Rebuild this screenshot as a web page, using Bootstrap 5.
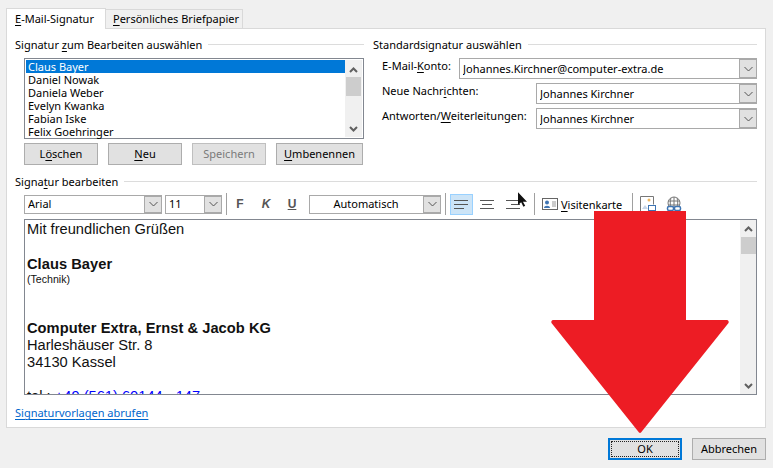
<!DOCTYPE html>
<html lang="de">
<head>
    <meta charset="UTF-8">
    <meta name="viewport" content="width=device-width, initial-scale=1.0">
    <title>Signaturen und Briefpapier</title>
    <link href="https://cdn.jsdelivr.net/npm/bootstrap@5.3.3/dist/css/bootstrap.min.css" rel="stylesheet">
    <script src="https://cdn.jsdelivr.net/npm/bootstrap@5.3.3/dist/js/bootstrap.bundle.min.js"></script>
    <style>
        html, body { height: 468px; overflow: hidden; }
        body { background: #f0f0f0; color: #000; font: 11px/15px "Noto Sans", sans-serif; position: relative; }
        u { text-underline-offset: 2px; }

        .dlg { width: 773px; height: 468px; padding: 8px 7px 0 6px; }

        .tabstrip { display: flex; height: 20px; align-items: flex-end; }
        .tabitem { height: 19px; padding: 1px 7px 0; background: #f0f0f0; border: 1px solid #d9d9d9; border-bottom: 0; border-left: 0; width: 137px; white-space: nowrap; }
        .tabitem.sel { height: 21px; width: 100px; padding: 2px 8px 0 8px; background: #fff; border-left: 1px solid #d9d9d9; margin-bottom: -1px; position: relative; z-index: 1; }

        .pane { height: 400px; background: #fff; border: 1px solid #d9d9d9; padding: 8px 8px 0; }

        .grp-title { display: flex; align-items: center; gap: 6px; height: 15px; white-space: nowrap; }
        .grp-title::after { content: ""; flex: 1; border-top: 1px solid #dcdcdc; }

        .col-left { width: 349px; }
        .col-right { width: 394px; margin-left: 9px; }
        .col-right .grp-title { margin-bottom: 6px; }

        .sig-list { margin: 6px 0 0 9px; width: 340px; height: 81px; border: 1px solid #828790; display: flex; padding: 1px; }
        .sig-items { flex: 1; list-style: none; margin: 0; padding: 0; }
        .sig-items li { height: 13px; line-height: 14px; padding-left: 2px; }
        .sig-items li.on { background: #0078d7; color: #fff; }

        .vbar { width: 17px; background: #f0f0f0; display: flex; flex-direction: column; align-items: center; }
        .vbar .thumb { width: 15px; background: #cdcdcd; }
        .vbar .thumb.t-list { height: 19px; }
        .vbar .thumb.t-edit { height: 17px; }
        .vbar svg:last-child { margin-top: auto; }

        .dbtn { height: 22px; padding: 0; background: #e1e1e1; border: 1px solid #adadad; border-radius: 0; color: #000; font: inherit; line-height: 18px; }
        .btn-row { margin: 4px 0 0 9px; }
        .btn-row .dbtn { width: 74px; margin-right: 10px; }
        .btn-row .dbtn:last-child { width: 87px; margin-right: 0; }
        .dbtn.off { color: #7a7a7a; border-color: #bfbfbf; }

        .acct-row { display: flex; height: 25px; padding-left: 9px; }
        .acct-row label { flex: 1; white-space: nowrap; }
        .drop { height: 21px; display: flex; border: 1px solid #a9a9a9; background: #fff; padding-left: 3px; line-height: 19px; }
        .drop span { flex: 1; white-space: nowrap; overflow: hidden; }
        .drop i { width: 17px; background: #e1e1e1; border: 1px solid #a9a9a9; border-right-width: 0; display: flex; align-items: center; justify-content: center; }
        .drop.w-mail { width: 298px; }
        .drop.w-name { width: 221px; }

        .edit-sec { margin-top: 9px; }
        .bar { display: flex; align-items: center; height: 22px; margin: 4px 0 4px 9px; }
        .bar .drop { height: 19px; line-height: 15px; }
        .bar .drop.font-box { width: 138px; margin-right: 3px; }
        .bar .drop.size-box { width: 57px; }
        .bar .drop.color-box { width: 132px; margin-left: 4px; }
        .bar .drop.color-box span { text-align: center; padding-right: 4px; }
        .tsep { width: 1px; height: 22px; background: #a0a0a0; margin: 0 4px; flex: none; }
        .tsep.after-al { margin-left: 6px; }
        .tsep.after-card { margin-left: 4px; }
        .tsep.after-size { margin-right: 0; }
        .fmt { width: 26px; text-align: center; font-weight: 700; color: #555; font-family: "Liberation Sans", sans-serif; font-size: 12px; }
        .al-btn { width: 23px; height: 21px; margin-right: 3px; display: flex; align-items: center; justify-content: center; border: 1px solid transparent; }
        .al-btn.on { background: #cce4f7; border-color: #99d1ff; }
        .vcard { display: flex; align-items: center; gap: 3px; white-space: nowrap; margin-left: 3px; width: 86px; }
        .img-ico { margin-left: 3px; }
        .web-ico { margin-left: 10px; }

        .editor { display: flex; margin-left: 9px; height: 176px; border: 1px solid #828790; }
        .editor-body { flex: 1; overflow: hidden; padding: 1px 2px 0; font: 14.67px/17px "Liberation Sans", sans-serif; color: #111; }
        .editor-body p { margin: 0; min-height: 17px; }
        .editor-body p.gap-line { min-height: 18px; }
        .editor-body .strong-line { font-weight: 700; letter-spacing: .04px; }
        .editor-body small { font-size: 10.6px; display: block; line-height: 13px; }
        .editor-body a { color: #0000ff; text-decoration: none; }
        .editor .vbar { width: 16px; }

        .tpl-link { display: inline-block; margin-top: 10px; color: #0066cc; text-decoration: underline; text-underline-offset: 2px; }

        .foot { display: flex; justify-content: flex-end; gap: 10px; padding: 10px 0 0; }
        .foot .dbtn { width: 74px; }
        .foot .dbtn.def { border: 2px solid #0078d7; }
        .foot .dbtn.def span { display: block; margin: 1px; border: 1px dotted #222; line-height: 14px; }

        .big-arrow { position: absolute; left: 551px; top: 211px; width: 178px; height: 222px; }
        .cursor-mark { position: absolute; left: 518px; top: 192px; width: 9px; height: 15px; }
    </style>
</head>
<body>
<div class="dlg">
    <div class="tabstrip">
        <div class="tabitem sel"><u>E</u>-Mail-Signatur</div>
        <div class="tabitem"><u>P</u>ersönliches Briefpapier</div>
    </div>
    <div class="pane">
        <div class="d-flex">
            <div class="col-left">
                <div class="grp-title"><span>Signatur <u>z</u>um Bearbeiten auswählen</span></div>
                <div class="sig-list">
                    <ul class="sig-items">
                        <li class="on">Claus Bayer</li>
                        <li>Daniel Nowak</li>
                        <li>Daniela Weber</li>
                        <li>Evelyn Kwanka</li>
                        <li>Fabian Iske</li>
                        <li>Felix Goehringer</li>
                    </ul>
                    <div class="vbar">
                        <svg width="9" height="17" viewBox="0 0 9 17"><path d="M1 12l3.500-3.500L8 12" fill="none" stroke="#606060" stroke-width="2"/></svg>
                        <div class="thumb t-list"></div>
                        <svg width="9" height="14" viewBox="0 0 9 14"><path d="M1 4l3.500 3.500L8 4" fill="none" stroke="#606060" stroke-width="2"/></svg>
                    </div>
                </div>
                <div class="btn-row d-flex">
                    <button class="dbtn">L<u>ö</u>schen</button>
                    <button class="dbtn"><u>N</u>eu</button>
                    <button class="dbtn off">Speichern</button>
                    <button class="dbtn"><u>U</u>mbenennen</button>
                </div>
            </div>
            <div class="col-right">
                <div class="grp-title"><span>Standardsignatur auswählen</span></div>
                <div class="acct-row">
                    <label>E-Mail-<u>K</u>onto:</label>
                    <div class="drop w-mail"><span>Johannes.Kirchner@computer-extra.de</span><i><svg width="9" height="6" viewBox="0 0 9 6"><path d="M.5 1l4 4 4-4" fill="none" stroke="#555"/></svg></i></div>
                </div>
                <div class="acct-row">
                    <label>Neue Nachr<u>i</u>chten:</label>
                    <div class="drop w-name"><span>Johannes Kirchner</span><i><svg width="9" height="6" viewBox="0 0 9 6"><path d="M.5 1l4 4 4-4" fill="none" stroke="#555"/></svg></i></div>
                </div>
                <div class="acct-row">
                    <label>Antworten/<u>W</u>eiterleitungen:</label>
                    <div class="drop w-name"><span>Johannes Kirchner</span><i><svg width="9" height="6" viewBox="0 0 9 6"><path d="M.5 1l4 4 4-4" fill="none" stroke="#555"/></svg></i></div>
                </div>
            </div>
        </div>
        <div class="edit-sec">
            <div class="grp-title"><span>Signa<u>t</u>ur bearbeiten</span></div>
            <div class="bar">
                <div class="drop font-box"><span>Arial</span><i><svg width="9" height="6" viewBox="0 0 9 6"><path d="M.5 1l4 4 4-4" fill="none" stroke="#555"/></svg></i></div>
                <div class="drop size-box"><span>11</span><i><svg width="9" height="6" viewBox="0 0 9 6"><path d="M.5 1l4 4 4-4" fill="none" stroke="#555"/></svg></i></div>
                <div class="tsep after-size"></div>
                <div class="fmt">F</div>
                <div class="fmt fst-italic">K</div>
                <div class="fmt text-decoration-underline">U</div>
                <div class="drop color-box"><span>Automatisch</span><i><svg width="9" height="6" viewBox="0 0 9 6"><path d="M.5 1l4 4 4-4" fill="none" stroke="#555"/></svg></i></div>
                <div class="tsep"></div>
                <div class="al-btn on"><svg width="15" height="11" viewBox="0 0 15 11"><path d="M0 1.500h14M0 5.500h14M0 9.500h10" stroke="#555"/></svg></div>
                <div class="al-btn"><svg width="15" height="11" viewBox="0 0 15 11"><path d="M0 1.500h14M2 5.500h10M0 9.500h14" stroke="#555"/></svg></div>
                <div class="al-btn"><svg width="15" height="11" viewBox="0 0 15 11"><path d="M0 1.500h14M5 5.500h9M0 9.500h14" stroke="#555"/></svg></div>
                <div class="tsep after-al"></div>
                <div class="vcard">
                    <svg width="16" height="12" viewBox="0 0 16 12"><rect x=".5" y=".5" width="15" height="11" fill="#fff" stroke="#666"/><circle cx="5" cy="4.500" r="2" fill="#3e74b3"/><path d="M2 10c0-3 6-3 6 0z" fill="#3e74b3"/><path d="M10 4h4M10 6h4M10 8h4" stroke="#999"/></svg>
                    <span><u>V</u>isitenkarte</span>
                </div>
                <div class="tsep after-card"></div>
                <svg class="img-ico" width="16" height="16" viewBox="0 0 16 16"><path d="M.5 15V.5h13v8" fill="#fff" stroke="#777"/><path d="M2 13l3-4 3 4z" fill="#c8d6e8"/><circle cx="9" cy="4" r="1.500" fill="#f0b860"/><rect x="8.500" y="9.500" width="7" height="5" fill="#fff" stroke="#3e74b3"/></svg>
                <svg class="web-ico" width="16" height="16" viewBox="0 0 16 16"><circle cx="8" cy="7" r="6" fill="#fff" stroke="#777"/><path d="M2 5h12M2 9h12M8 1v12M5 2c-1 3-1 7 0 10M11 2c1 3 1 7 0 10" fill="none" stroke="#777"/><rect x="1.500" y="10.500" width="6" height="4" rx="1.500" fill="#fff" stroke="#3e74b3" stroke-width="1.500"/><rect x="8.500" y="10.500" width="6" height="4" rx="1.500" fill="#fff" stroke="#3e74b3" stroke-width="1.500"/></svg>
            </div>
            <div class="editor">
                <div class="editor-body">
                    <p>Mit freundlichen Grüßen</p>
                    <p class="gap-line"></p>
                    <p class="strong-line">Claus Bayer</p>
                    <small>(Technik)</small>
                    <p></p>
                    <p></p>
                    <p class="strong-line">Computer Extra, Ernst &amp; Jacob KG</p>
                    <p>Harleshäuser Str. 8</p>
                    <p>34130 Kassel</p>
                    <p></p>
                    <p>tel.: <a href="#">+49 (561) 60144 - 147</a></p>
                </div>
                <div class="vbar">
                    <svg width="9" height="17" viewBox="0 0 9 17"><path d="M1 11l3.500-3.500L8 11" fill="none" stroke="#606060" stroke-width="2"/></svg>
                    <div class="thumb t-edit"></div>
                    <svg width="9" height="13" viewBox="0 0 9 13"><path d="M1 3l3.500 3.500L8 3" fill="none" stroke="#606060" stroke-width="2"/></svg>
                </div>
            </div>
            <a class="tpl-link" href="#">Signaturvorlagen abrufen</a>
        </div>
    </div>
    <div class="foot">
        <button class="dbtn def"><span>OK</span></button>
        <button class="dbtn">Abbrechen</button>
    </div>
</div>
<svg class="cursor-mark" viewBox="0 0 10 16"><path d="M0 0v14l3.500-3 2.500 5 2-1-2.500-4.500H10z" fill="#111"/></svg>
<svg class="big-arrow" viewBox="0 0 178 222"><path d="M43 0h92v109h41c1.500 0 2 2 1.500 3L90 221.500c-.500.500-1.500.500-2 0L.500 112c-.500-1 0-3 1.500-3h41z" fill="#ed1c24"/></svg>
</body>
</html>
